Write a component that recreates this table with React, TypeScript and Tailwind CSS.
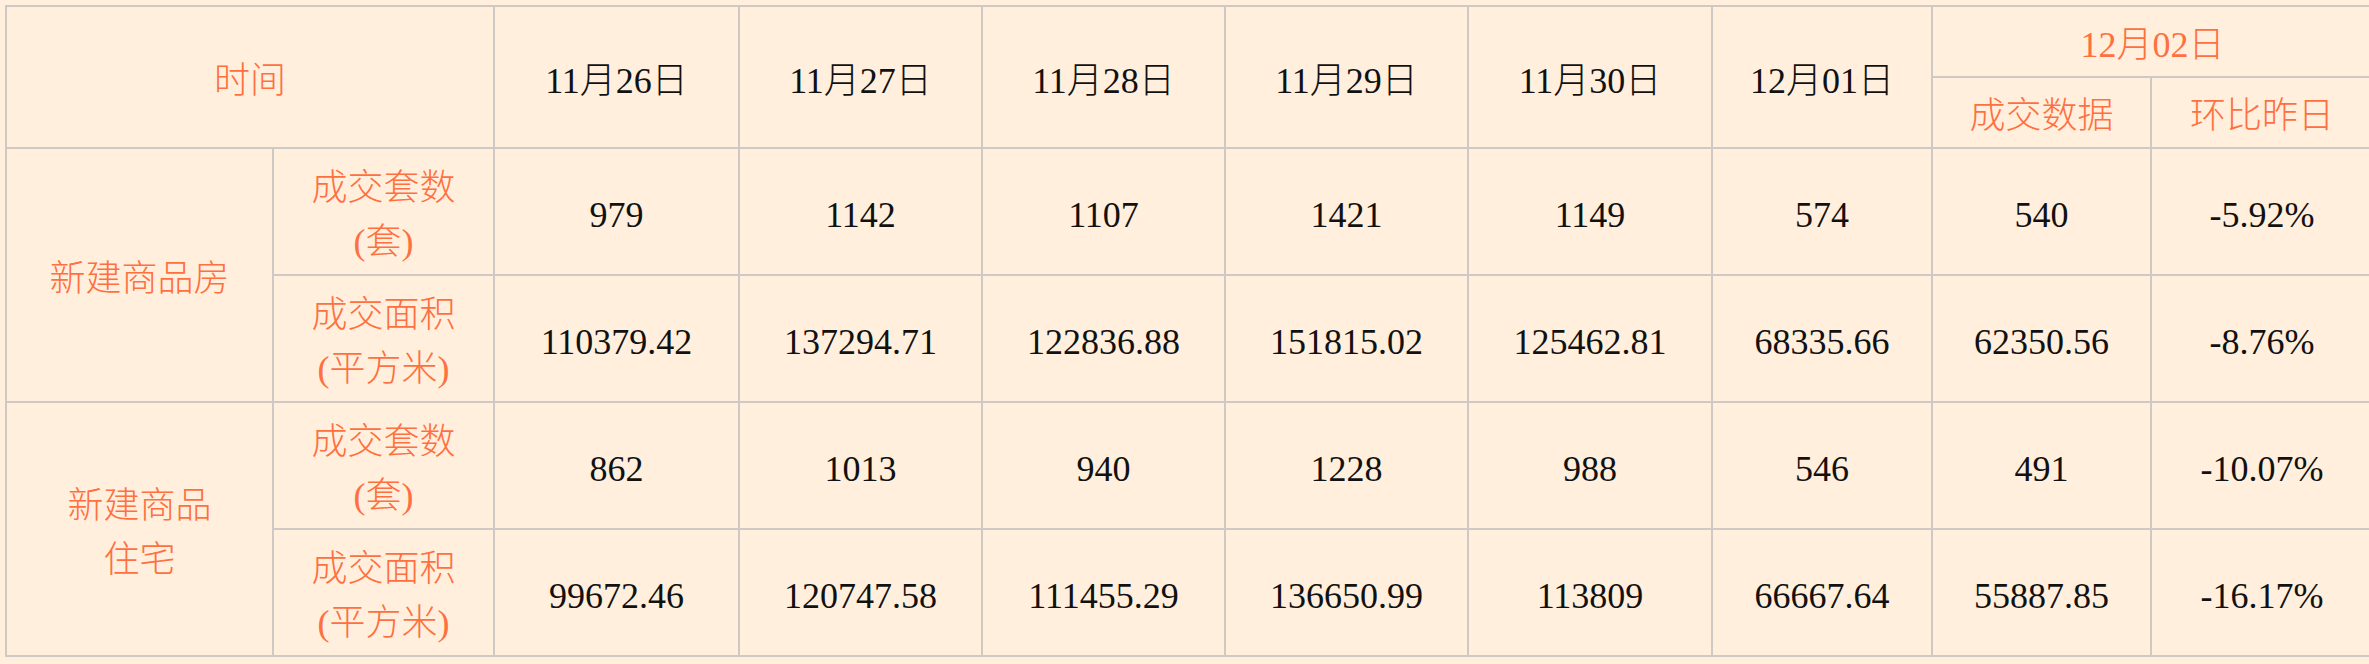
import React from "react";

const dates = ["11月26日", "11月27日", "11月28日", "11月29日", "11月30日", "12月01日"];

type Row = { group?: string; groupRows?: number; label: [string, string]; values: string[] };

const rows: Row[] = [
  {
    group: "新建商品房",
    groupRows: 2,
    label: ["成交套数", "(套)"],
    values: ["979", "1142", "1107", "1421", "1149", "574", "540", "-5.92%"],
  },
  {
    label: ["成交面积", "(平方米)"],
    values: ["110379.42", "137294.71", "122836.88", "151815.02", "125462.81", "68335.66", "62350.56", "-8.76%"],
  },
  {
    group: "新建商品\n住宅",
    groupRows: 2,
    label: ["成交套数", "(套)"],
    values: ["862", "1013", "940", "1228", "988", "546", "491", "-10.07%"],
  },
  {
    label: ["成交面积", "(平方米)"],
    values: ["99672.46", "120747.58", "111455.29", "136650.99", "113809", "66667.64", "55887.85", "-16.17%"],
  },
];

const widths = [267, 221, 245, 243, 243, 243, 244, 220, 219, 222];

const cell = "border-2 border-[#cfc9c5] text-center align-middle pt-[7px] pb-0 px-0";
const orange = "text-[#ff7040] font-light";
const dark = "text-[#111111] font-light";

export default function App() {
  return (
    <div
      className="w-[2369px] h-[664px] overflow-hidden bg-[#ffefdc] pt-[5px] pl-[5px] text-[36px] leading-[54px]"
      style={{ fontFamily: '"Liberation Serif", "Noto Sans CJK SC", serif' }}
    >
      <table className="border-collapse table-fixed w-[2369px] bg-[#ffefdc]">
        <colgroup>
          {widths.map((w, i) => (
            <col key={i} style={{ width: w }} />
          ))}
        </colgroup>
        <tbody>
          <tr className="h-[71px]">
            <td className={`${cell} ${orange}`} colSpan={2} rowSpan={2}>
              时间
            </td>
            {dates.map((d) => (
              <td key={d} className={`${cell} ${dark}`} rowSpan={2}>
                {d}
              </td>
            ))}
            <td className={`${cell} ${orange}`} colSpan={2}>
              12月02日
            </td>
          </tr>
          <tr className="h-[71px]">
            <td className={`${cell} ${orange}`}>成交数据</td>
            <td className={`${cell} ${orange}`}>环比昨日</td>
          </tr>
          {rows.map((r, i) => (
            <tr key={i} className="h-[127px]">
              {r.group && (
                <td className={`${cell} ${orange}`} rowSpan={r.groupRows}>
                  {r.group.split("\n").map((line, j) => (
                    <div key={j}>{line}</div>
                  ))}
                </td>
              )}
              <td className={`${cell} ${orange}`}>
                <div>{r.label[0]}</div>
                <div>{r.label[1]}</div>
              </td>
              {r.values.map((v, j) => (
                <td key={j} className={`${cell} ${dark}`}>
                  {v}
                </td>
              ))}
            </tr>
          ))}
        </tbody>
      </table>
    </div>
  );
}
